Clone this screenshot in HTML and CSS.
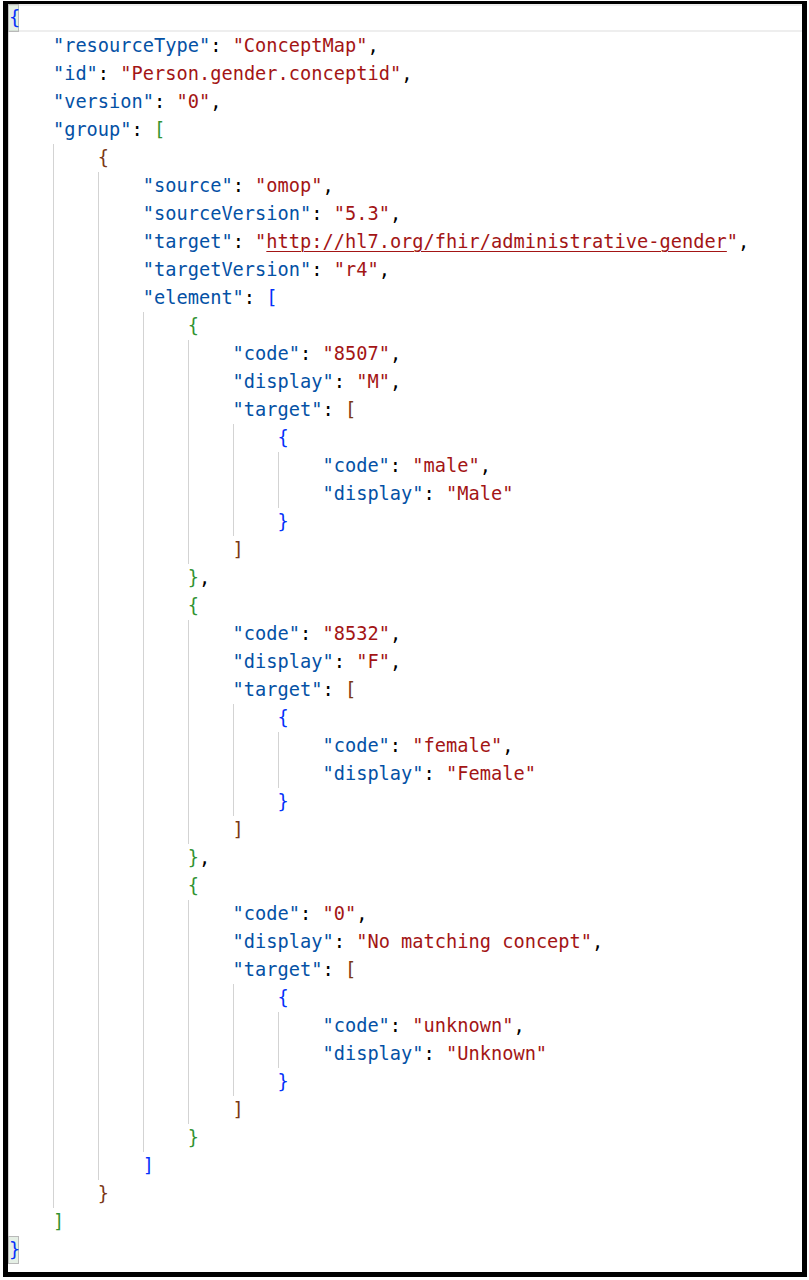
FILE: index.html
```html
<!DOCTYPE html>
<html lang="en">
<head>
<meta charset="utf-8">
<title>ConceptMap JSON</title>
<link rel="stylesheet" href="styles.css">
</head>
<body>
<div class="frame">
<div class="code">
<div class="ln cur"><span class="m b1">{</span></div>
<div class="ln"><span class="g"></span><span class="k">"resourceType"</span>: <span class="s">"ConceptMap"</span>,</div>
<div class="ln"><span class="g"></span><span class="k">"id"</span>: <span class="s">"Person.gender.conceptid"</span>,</div>
<div class="ln"><span class="g"></span><span class="k">"version"</span>: <span class="s">"0"</span>,</div>
<div class="ln"><span class="g"></span><span class="k">"group"</span>: <span class="b2">[</span></div>
<div class="ln"><span class="g"></span><span class="g"></span><span class="b3">{</span></div>
<div class="ln"><span class="g"></span><span class="g"></span><span class="g"></span><span class="k">"source"</span>: <span class="s">"omop"</span>,</div>
<div class="ln"><span class="g"></span><span class="g"></span><span class="g"></span><span class="k">"sourceVersion"</span>: <span class="s">"5.3"</span>,</div>
<div class="ln"><span class="g"></span><span class="g"></span><span class="g"></span><span class="k">"target"</span>: <span class="s">"<span class="u">http://hl7.org/fhir/administrative-gender</span>"</span>,</div>
<div class="ln"><span class="g"></span><span class="g"></span><span class="g"></span><span class="k">"targetVersion"</span>: <span class="s">"r4"</span>,</div>
<div class="ln"><span class="g"></span><span class="g"></span><span class="g"></span><span class="k">"element"</span>: <span class="b1">[</span></div>
<div class="ln"><span class="g"></span><span class="g"></span><span class="g"></span><span class="g"></span><span class="b2">{</span></div>
<div class="ln"><span class="g"></span><span class="g"></span><span class="g"></span><span class="g"></span><span class="g"></span><span class="k">"code"</span>: <span class="s">"8507"</span>,</div>
<div class="ln"><span class="g"></span><span class="g"></span><span class="g"></span><span class="g"></span><span class="g"></span><span class="k">"display"</span>: <span class="s">"M"</span>,</div>
<div class="ln"><span class="g"></span><span class="g"></span><span class="g"></span><span class="g"></span><span class="g"></span><span class="k">"target"</span>: <span class="b3">[</span></div>
<div class="ln"><span class="g"></span><span class="g"></span><span class="g"></span><span class="g"></span><span class="g"></span><span class="g"></span><span class="b1">{</span></div>
<div class="ln"><span class="g"></span><span class="g"></span><span class="g"></span><span class="g"></span><span class="g"></span><span class="g"></span><span class="g"></span><span class="k">"code"</span>: <span class="s">"male"</span>,</div>
<div class="ln"><span class="g"></span><span class="g"></span><span class="g"></span><span class="g"></span><span class="g"></span><span class="g"></span><span class="g"></span><span class="k">"display"</span>: <span class="s">"Male"</span></div>
<div class="ln"><span class="g"></span><span class="g"></span><span class="g"></span><span class="g"></span><span class="g"></span><span class="g"></span><span class="b1">}</span></div>
<div class="ln"><span class="g"></span><span class="g"></span><span class="g"></span><span class="g"></span><span class="g"></span><span class="b3">]</span></div>
<div class="ln"><span class="g"></span><span class="g"></span><span class="g"></span><span class="g"></span><span class="b2">}</span>,</div>
<div class="ln"><span class="g"></span><span class="g"></span><span class="g"></span><span class="g"></span><span class="b2">{</span></div>
<div class="ln"><span class="g"></span><span class="g"></span><span class="g"></span><span class="g"></span><span class="g"></span><span class="k">"code"</span>: <span class="s">"8532"</span>,</div>
<div class="ln"><span class="g"></span><span class="g"></span><span class="g"></span><span class="g"></span><span class="g"></span><span class="k">"display"</span>: <span class="s">"F"</span>,</div>
<div class="ln"><span class="g"></span><span class="g"></span><span class="g"></span><span class="g"></span><span class="g"></span><span class="k">"target"</span>: <span class="b3">[</span></div>
<div class="ln"><span class="g"></span><span class="g"></span><span class="g"></span><span class="g"></span><span class="g"></span><span class="g"></span><span class="b1">{</span></div>
<div class="ln"><span class="g"></span><span class="g"></span><span class="g"></span><span class="g"></span><span class="g"></span><span class="g"></span><span class="g"></span><span class="k">"code"</span>: <span class="s">"female"</span>,</div>
<div class="ln"><span class="g"></span><span class="g"></span><span class="g"></span><span class="g"></span><span class="g"></span><span class="g"></span><span class="g"></span><span class="k">"display"</span>: <span class="s">"Female"</span></div>
<div class="ln"><span class="g"></span><span class="g"></span><span class="g"></span><span class="g"></span><span class="g"></span><span class="g"></span><span class="b1">}</span></div>
<div class="ln"><span class="g"></span><span class="g"></span><span class="g"></span><span class="g"></span><span class="g"></span><span class="b3">]</span></div>
<div class="ln"><span class="g"></span><span class="g"></span><span class="g"></span><span class="g"></span><span class="b2">}</span>,</div>
<div class="ln"><span class="g"></span><span class="g"></span><span class="g"></span><span class="g"></span><span class="b2">{</span></div>
<div class="ln"><span class="g"></span><span class="g"></span><span class="g"></span><span class="g"></span><span class="g"></span><span class="k">"code"</span>: <span class="s">"0"</span>,</div>
<div class="ln"><span class="g"></span><span class="g"></span><span class="g"></span><span class="g"></span><span class="g"></span><span class="k">"display"</span>: <span class="s">"No matching concept"</span>,</div>
<div class="ln"><span class="g"></span><span class="g"></span><span class="g"></span><span class="g"></span><span class="g"></span><span class="k">"target"</span>: <span class="b3">[</span></div>
<div class="ln"><span class="g"></span><span class="g"></span><span class="g"></span><span class="g"></span><span class="g"></span><span class="g"></span><span class="b1">{</span></div>
<div class="ln"><span class="g"></span><span class="g"></span><span class="g"></span><span class="g"></span><span class="g"></span><span class="g"></span><span class="g"></span><span class="k">"code"</span>: <span class="s">"unknown"</span>,</div>
<div class="ln"><span class="g"></span><span class="g"></span><span class="g"></span><span class="g"></span><span class="g"></span><span class="g"></span><span class="g"></span><span class="k">"display"</span>: <span class="s">"Unknown"</span></div>
<div class="ln"><span class="g"></span><span class="g"></span><span class="g"></span><span class="g"></span><span class="g"></span><span class="g"></span><span class="b1">}</span></div>
<div class="ln"><span class="g"></span><span class="g"></span><span class="g"></span><span class="g"></span><span class="g"></span><span class="b3">]</span></div>
<div class="ln"><span class="g"></span><span class="g"></span><span class="g"></span><span class="g"></span><span class="b2">}</span></div>
<div class="ln"><span class="g"></span><span class="g"></span><span class="g"></span><span class="b1">]</span></div>
<div class="ln"><span class="g"></span><span class="g"></span><span class="b3">}</span></div>
<div class="ln"><span class="g"></span><span class="b2">]</span></div>
<div class="ln"><span class="m b1">}</span></div>
</div>
</div>
</body>
</html>
```

FILE: styles.css
```css
html, body {
  margin: 0;
  padding: 0;
  background: #ffffff;
}

.frame {
  box-sizing: border-box;
  width: 804px;
  height: 1276px;
  margin: 1px 0 0 3px;
  border: 5px solid #000000;
  border-top-width: 3px;
  overflow: hidden;
  background: #ffffff;
}

.code {
  font-family: "DejaVu Sans Mono", "Liberation Mono", monospace;
  font-size: 18.67px;
  line-height: 28px;
  color: #000000;
}

.ln {
  height: 28px;
  white-space: pre;
}

.cur {
  box-shadow: inset 0 2px 0 #eeeeee, inset 0 -2px 0 #eeeeee;
}

.g {
  display: inline-block;
  box-sizing: border-box;
  width: 4ch;
  height: 28px;
  vertical-align: top;
  border-left: 1px solid #d3d3d3;
}

.k { color: #0451a5; }
.s { color: #a31515; }
.b1 { color: #0431fa; }
.b2 { color: #319331; }
.b3 { color: #7b3814; }

.u {
  text-decoration: underline;
  text-decoration-thickness: 1px;
  text-underline-offset: 3px;
}

.m {
  display: inline-block;
  box-sizing: border-box;
  width: 1ch;
  height: 28px;
  line-height: 26px;
  vertical-align: top;
  border: 1px solid #b9b9b9;
  background: rgba(0, 100, 0, 0.1);
}
```
